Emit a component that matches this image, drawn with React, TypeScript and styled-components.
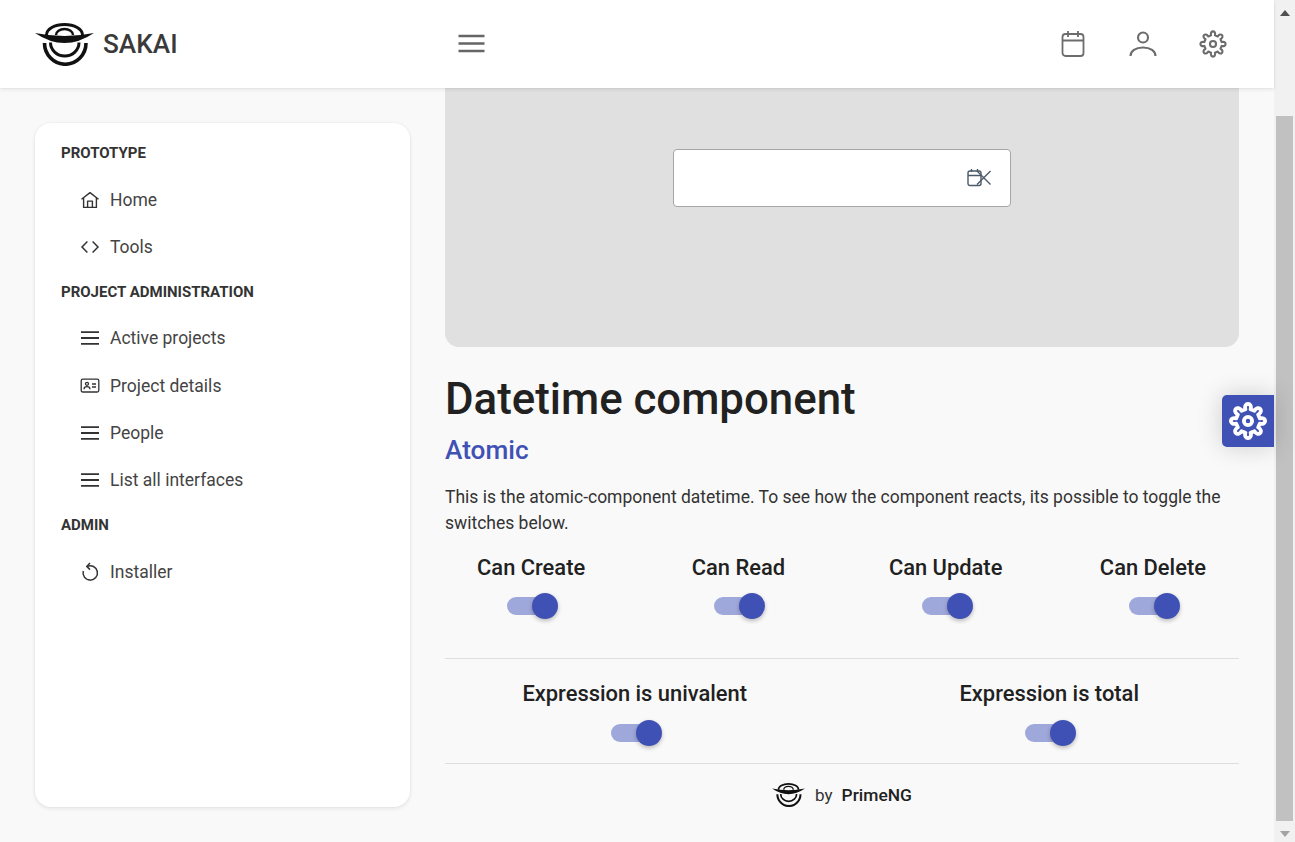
import React from "react";
import styled, { createGlobalStyle } from "styled-components";

const Global = createGlobalStyle`
  html, body { margin: 0; padding: 0; height: 100%; overflow: hidden; }
  body { font-family: Roboto, "Liberation Sans", sans-serif; color: rgba(0,0,0,.87); background: #f9f9f9; }
  * { box-sizing: border-box; }
`;

const Shell = styled.div`
  width: 1295px; height: 842px; display: flex; overflow: hidden; position: relative;
`;
const Viewport = styled.div`
  width: 1274px; display: flex; flex-direction: column; position: relative; background: #f9f9f9;
`;
const Topbar = styled.header`
  height: 88px; flex: none; background: #fff; display: flex; align-items: center; padding: 0 35px;
  box-shadow: 0 3px 5px rgba(0,0,0,.02), 0 0 2px rgba(0,0,0,.05), 0 1px 4px rgba(0,0,0,.08);
  position: relative; z-index: 2;
`;
const Brand = styled.div`
  width: 423px; display: flex; align-items: center; gap: 9px;
  font-size: 26.2px; font-weight: 500; color: #3a3a3a;
`;
const Burger = styled.button`
  border: 0; background: none; padding: 0; margin-right: auto; display: block; height: 20px;
  svg { display: block; }
`;
const TopActions = styled.div`
  display: flex; gap: 42px; margin-right: 12px; color: #6c6c6c;
  svg { display: block; }
  svg:first-child { margin-right: 2px; }
`;
const Body = styled.div`
  flex: 1; display: flex; padding: 0 35px; gap: 35px; min-height: 0;
`;
const Sidebar = styled.nav`
  width: 375px; flex: none; margin-top: 35px; height: 684px; background: #fff; border-radius: 16px;
  padding: 20px 26px; box-shadow: 0 3px 5px rgba(0,0,0,.02), 0 0 2px rgba(0,0,0,.05), 0 1px 4px rgba(0,0,0,.08);
`;
const GroupTitle = styled.div`
  font-size: 15px; font-weight: 700; line-height: 20px; color: #333; margin-bottom: 13px;
`;
const NavItem = styled.a`
  display: flex; align-items: center; height: 47.3px; padding-left: 19px; gap: 10px;
  font-size: 17.5px; color: #444; font-weight: 400;
  svg { flex: none; }
`;
const Group = styled.section`
  margin-bottom: 11px;
  &:last-child ${GroupTitle} { margin-bottom: 14px; }
`;
const Main = styled.main`
  flex: 1; min-width: 0;
`;
const Stage = styled.div`
  height: 259px; background: #e0e0e0; border-radius: 0 0 14px 14px; padding-top: 61px; display: flex; justify-content: center; align-items: flex-start;
`;
const DateBox = styled.div`
  width: 338px; height: 58px; background: #fff; border: 1px solid #a6a6a6; border-radius: 4px;
  display: flex; align-items: center; justify-content: flex-end; padding-right: 18px;
`;
const Title = styled.h1`
  font-size: 43.8px; font-weight: 500; line-height: 52px; margin: 26px 0 0; color: #212121;
`;
const Subtitle = styled.h2`
  font-size: 26.2px; font-weight: 500; line-height: 32px; margin: 9px 0 0; color: #3f51b5;
`;
const Para = styled.p`
  font-size: 17.5px; line-height: 26px; margin: 18px 0 0; color: #333;
`;
const SwitchCell = styled.div`
  display: flex; flex-direction: column; align-items: center; gap: 14px;
`;
const SwitchRow = styled.div<{ $cols: number }>`
  display: grid; grid-template-columns: repeat(${p => p.$cols}, 1fr); margin: 0 -17.5px;
`;
const FirstRow = styled(SwitchRow)`
  padding-top: 18px; height: 122px;
`;
const SecondRow = styled(SwitchRow)`
  padding-top: 21px; height: 104px;
  ${SwitchCell} { gap: 15px; }
`;
const Rule = styled.hr`
  border: 0; border-top: 1px solid #dedede; margin: 0;
`;
const SwitchLabel = styled.div`
  font-size: 21.9px; font-weight: 500; line-height: 27px; color: #212121;
`;
const Track = styled.div`
  width: 44px; height: 18px; border-radius: 9px; background: #9fa8da; position: relative; margin-top: 2px;
  transform: translateX(-2px);
  &::after {
    content: ""; position: absolute; width: 26px; height: 26px; border-radius: 50%; background: #3f51b5; top: -4px; right: -7px;
    box-shadow: 0 2px 4px rgba(0,0,0,.25);
  }
`;
const Footer = styled.footer`
  display: flex; justify-content: center; align-items: center; height: 62px; font-size: 17px; color: #333; gap: 8px;
  svg { margin-right: 2px; }
  strong { font-weight: 500; margin-left: 1px; color: #212121; font-size: 17.4px; }
`;
const ConfigButton = styled.button`
  position: absolute; right: 0; top: 395px; width: 52px; height: 52px; border: 0; padding: 0; color: #fff;
  background: #3f51b5; border-radius: 5px 0 0 5px; display: flex; align-items: center; justify-content: center;
  box-shadow: 0 0 24px rgba(0,0,0,.18); z-index: 3;
`;
const ScrollBar = styled.div`
  width: 21px; flex: none; background: #f1f1f1; display: flex; flex-direction: column; align-items: center;
`;
const Arrow = styled.div`
  height: 17px; margin-top: 4px; flex: none; display: flex; align-items: center; justify-content: center; width: 100%;
  svg { display: block; }
`;
const ThumbGap = styled.div`
  flex: none; height: 95px;
`;
const Thumb = styled.div`
  width: 17px; height: 705px; flex: none; background: #c1c1c1;
`;

const Logo = ({ w, h }: { w: number; h: number }) => (
  <svg width={w} height={h} viewBox="0 0 59 43" fill="none">
    <path d="M11.5 12 A18 10.5 0 0 1 47.5 12" stroke="#111" strokeWidth="3" />
    <path d="M21 12 A8.5 6 0 0 1 38 12" stroke="#111" strokeWidth="2.4" />
    <path d="M0 10 Q29.5 30 59 10 Q29.5 16 0 10Z" fill="#111" />
    <path d="M9.5 20 A20.5 21 0 0 0 51 20" stroke="#111" strokeWidth="3.6" />
    <path d="M15.5 19.5 A14.2 13.5 0 0 0 44 19.5" stroke="#111" strokeWidth="3" />
  </svg>
);

const Bars = () => (
  <svg width="20" height="20" viewBox="0 0 20 20" stroke="#333" strokeWidth="1.8">
    <path d="M1 4.2h18M1 10h18M1 15.8h18" />
  </svg>
);
const Home = () => (
  <svg width="20" height="20" viewBox="0 0 20 20" fill="none" stroke="#333" strokeWidth="1.4" strokeLinejoin="round">
    <path d="M1.5 9.2 10 2.6l8.5 6.6M3.6 7.8v9.6h12.8V7.8" />
    <path d="M7.6 17.3v-6.2h4.8v6.2" />
  </svg>
);
const Code = () => (
  <svg width="20" height="20" viewBox="0 0 20 20" fill="none" stroke="#333" strokeWidth="1.5">
    <path d="M7.4 4.5 2 10l5.4 5.5M12.6 4.5 18 10l-5.4 5.5" />
  </svg>
);
const IdCard = () => (
  <svg width="20" height="20" viewBox="0 0 20 20" fill="none" stroke="#333" strokeWidth="1.3">
    <rect x="1.2" y="3.2" width="17.6" height="12.8" rx="1.5" />
    <circle cx="7" cy="7.8" r="1.5" />
    <path d="M4 13.2c0-1.8 1.4-2.6 3-2.6s3 .8 3 2.6M12 8h4M12 11h4" />
  </svg>
);
const Replay = () => (
  <svg width="20" height="20" viewBox="0 0 20 20" fill="none" stroke="#333" strokeWidth="1.5">
    <path d="M7.2 4.4A7.2 7.2 0 1 1 3.3 9" />
    <path d="M10 1 6.8 4.4 10 7.6" />
  </svg>
);

const gearPath = (() => {
  const n = 8, cx = 12, cy = 12, ro = 11.6, ri = 7.6;
  const pts: string[] = [];
  for (let i = 0; i < n; i++) {
    const a = (i / n) * Math.PI * 2 - Math.PI / 2;
    const s = Math.PI / n;
    const p = (r: number, t: number) => `${(cx + r * Math.cos(t)).toFixed(2)} ${(cy + r * Math.sin(t)).toFixed(2)}`;
    pts.push(`${i === 0 ? "M" : "L"}${p(ri, a - s * 0.56)}`);
    pts.push(`C${p(ro * 1.06, a - s * 0.62)} ${p(ro * 1.06, a + s * 0.62)} ${p(ri, a + s * 0.56)}`);
  }
  return pts.join(" ") + "Z";
})();

const Gear = ({ size, width }: { size: number; width: number }) => (
  <svg width={size} height={size} viewBox="0 0 24 24" fill="none" stroke="currentColor" strokeWidth={width} strokeLinejoin="round">
    <path d={gearPath} />
    <circle cx="12" cy="12" r="2.6" />
  </svg>
);

const Calendar = () => (
  <svg width="24" height="28" viewBox="0 0 24 28" fill="none" stroke="currentColor" strokeWidth="1.8">
    <rect x="1.5" y="4" width="21" height="22" rx="3" />
    <path d="M1.5 10.5h21M7 1v6M17 1v6" />
  </svg>
);
const Person = () => (
  <svg width="28" height="28" viewBox="0 0 28 28" fill="none" stroke="currentColor" strokeWidth="2.1">
    <circle cx="14" cy="7.5" r="5" />
    <path d="M1.5 26c0-5 5-8.5 12.5-8.5s12.5 3.5 12.5 8.5" />
  </svg>
);
const ClearCalendar = () => (
  <svg width="25" height="20" viewBox="0 0 25 20" fill="none" stroke="#4a5a6a" strokeWidth="1.4">
    <rect x="1" y="3" width="13" height="14.5" rx="2" />
    <path d="M1 7.5h13M4.5 1v3M10.5 1v3" />
    <path d="M10 16 23.5 2.5M10 2.5 23.5 16" transform="translate(0 .5)" />
  </svg>
);

const switches = ["Can Create", "Can Read", "Can Update", "Can Delete"];
const exprs = ["Expression is univalent", "Expression is total"];

const SwitchItem = ({ label }: { label: string }) => (
  <SwitchCell>
    <SwitchLabel>{label}</SwitchLabel>
    <Track />
  </SwitchCell>
);

const nav = [
  { title: "PROTOTYPE", items: [["Home", <Home />], ["Tools", <Code />]] },
  { title: "PROJECT ADMINISTRATION", items: [["Active projects", <Bars />], ["Project details", <IdCard />], ["People", <Bars />], ["List all interfaces", <Bars />]] },
  { title: "ADMIN", items: [["Installer", <Replay />]] },
] as const;

export default function App() {
  return (
    <Shell>
      <Global />
      <Viewport>
        <Topbar>
          <Brand>
            <Logo w={59} h={43} />
            <span>SAKAI</span>
          </Brand>
          <Burger aria-label="menu">
            <svg width="27" height="20" viewBox="0 0 27 20" stroke="#666" strokeWidth="2.3">
              <path d="M.5 2h26M.5 9.5h26M.5 17h26" />
            </svg>
          </Burger>
          <TopActions>
            <Calendar />
            <Person />
            <Gear size={28} width={1.8} />
          </TopActions>
        </Topbar>
        <Body>
          <Sidebar>
            {nav.map(g => (
              <Group key={g.title}>
                <GroupTitle>{g.title}</GroupTitle>
                {g.items.map(([label, icon]) => (
                  <NavItem key={label as string}>{icon}{label}</NavItem>
                ))}
              </Group>
            ))}
          </Sidebar>
          <Main>
            <Stage>
              <DateBox><ClearCalendar /></DateBox>
            </Stage>
            <Title>Datetime component</Title>
            <Subtitle>Atomic</Subtitle>
            <Para>This is the atomic-component datetime. To see how the component reacts, its possible to toggle the switches below.</Para>
            <FirstRow $cols={4}>
              {switches.map(s => <SwitchItem key={s} label={s} />)}
            </FirstRow>
            <Rule />
            <SecondRow $cols={2}>
              {exprs.map(s => <SwitchItem key={s} label={s} />)}
            </SecondRow>
            <Rule />
            <Footer>
              <Logo w={33} h={24} />
              <span>by</span>
              <strong>PrimeNG</strong>
            </Footer>
          </Main>
        </Body>
        <ConfigButton aria-label="settings"><Gear size={38} width={2.4} /></ConfigButton>
      </Viewport>
      <ScrollBar>
        <Arrow>
          <svg width="10" height="6" viewBox="0 0 10 6"><path d="M0 6 5 0l5 6Z" fill="#505050" /></svg>
        </Arrow>
        <ThumbGap />
        <Thumb />
        <Arrow>
          <svg width="10" height="6" viewBox="0 0 10 6"><path d="M0 0h10L5 6Z" fill="#a3a3a3" /></svg>
        </Arrow>
      </ScrollBar>
    </Shell>
  );
}
